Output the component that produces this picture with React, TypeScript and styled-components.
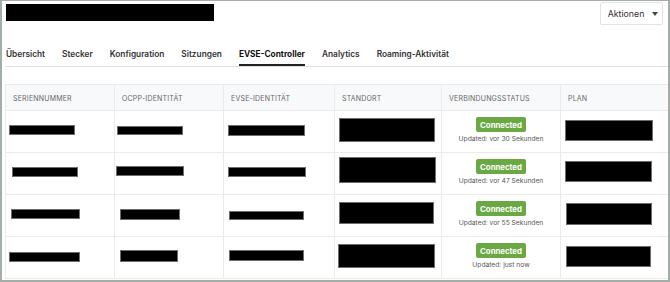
import React from "react";
import styled, { createGlobalStyle } from "styled-components";

const Global = createGlobalStyle`
  html, body { margin: 0; padding: 0; background: #fff; }
  body { font-family: Inter, "Noto Sans", Arial, sans-serif; }
  * { box-sizing: border-box; }
`;

const Frame = styled.div`
  width: 670px;
  height: 282px;
  border-style: solid;
  border-color: #a3aea9;
  border-width: 1px 2px 2px 2px;
  background: #fff;
  padding: 0 0 0 3px;
  display: flex;
  flex-direction: column;
  overflow: hidden;
`;

const Header = styled.div`
  display: flex;
  justify-content: space-between;
  align-items: flex-start;
  height: 41px;
`;

const Redaction = styled.div<{ $w: number; $h: number; $dx?: number; $dy?: number }>`
  width: ${(p) => p.$w}px;
  height: ${(p) => p.$h}px;
  background: #000;
  border: 1px solid #6d6d6d;
  margin-left: ${(p) => p.$dx ?? 0}px;
  margin-top: ${(p) => p.$dy ?? 0}px;
  flex: none;
`;

const TitleBlock = styled(Redaction)`
  margin: 3px 0 0 1px;
  border: none;
`;

const ActionButton = styled.button`
  margin: 1px 5px 0 0;
  width: 63px;
  height: 23px;
  background: #fff;
  border: 1px solid #e3e3e3;
  border-radius: 2px;
  font-family: Inter, "Noto Sans", Arial, sans-serif;
  font-size: 8.8px;
  color: #333;
  display: flex;
  align-items: center;
  justify-content: center;
  gap: 8px;
  padding: 0 0 0 3px;
`;

const Caret = styled.span`
  width: 0;
  height: 0;
  border-left: 3px solid transparent;
  border-right: 3px solid transparent;
  border-top: 4px solid #444;
`;

const TabBar = styled.div`
  display: flex;
  gap: 17px;
  border-bottom: 1px solid #e0e0e0;
  padding-left: 1px;
  height: 25px;
`;

const Tab = styled.div<{ $active?: boolean }>`
  font-size: 8.3px;
  font-weight: ${(p) => (p.$active ? 700 : 600)};
  color: ${(p) => (p.$active ? "#111" : "#333")};
  padding-top: 7px;
  height: 24px;
  border-bottom: 2px solid ${(p) => (p.$active ? "#222" : "transparent")};
  white-space: nowrap;
`;

const Table = styled.div`
  margin-top: 17px;
  width: 664px;
  border: 1px solid #ebebeb;
  border-bottom: none;
  display: grid;
  grid-template-columns: 109px 109px 111px 107px 119px 1fr;
`;

const HeadCell = styled.div<{ $last?: boolean }>`
  height: 26px;
  background: #f8f9fa;
  border-right: ${(p) => (p.$last ? "none" : "1px solid #ebebeb")};
  border-bottom: 1px solid #ebebeb;
  font-size: 7px;
  letter-spacing: 0.2px;
  color: #666;
  padding: 9px 0 0 7px;
  white-space: nowrap;
`;

const Cell = styled.div<{ $last?: boolean; $center?: boolean }>`
  height: 42px;
  border-right: ${(p) => (p.$last ? "none" : "1px solid #ebebeb")};
  border-bottom: 1px solid #ebebeb;
  display: flex;
  flex-direction: column;
  align-items: ${(p) => (p.$center ? "center" : "flex-start")};
  justify-content: flex-start;
`;

const Badge = styled.div`
  margin-top: 6px;
  background: #6aa843;
  color: #fff;
  font-weight: 700;
  font-size: 7.8px;
  border-radius: 2px;
  width: 50px;
  height: 15px;
  display: flex;
  align-items: center;
  justify-content: center;
`;

const Updated = styled.div`
  margin-top: 3px;
  font-size: 6.7px;
  color: #555;
  white-space: nowrap;
`;

type Box = [number, number, number, number]; // dx, dy, w, h

const rows: { boxes: Box[]; updated: string; plan: Box; standort: Box }[] = [
  {
    boxes: [
      [3, 14, 66, 10],
      [2, 15, 66, 9],
      [4, 14, 77, 11],
    ],
    standort: [4, 7, 96, 24],
    updated: "Updated: vor 30 Sekunden",
    plan: [4, 9, 88, 21],
  },
  {
    boxes: [
      [6, 14, 66, 10],
      [1, 13, 68, 10],
      [4, 14, 78, 10],
    ],
    standort: [4, 4, 97, 26],
    updated: "Updated: vor 47 Sekunden",
    plan: [4, 8, 87, 21],
  },
  {
    boxes: [
      [5, 14, 69, 10],
      [5, 14, 60, 11],
      [5, 16, 75, 9],
    ],
    standort: [4, 7, 95, 22],
    updated: "Updated: vor 55 Sekunden",
    plan: [5, 8, 86, 22],
  },
  {
    boxes: [
      [3, 15, 71, 10],
      [5, 13, 58, 12],
      [5, 13, 75, 11],
    ],
    standort: [3, 7, 97, 24],
    updated: "Updated: just now",
    plan: [5, 9, 85, 21],
  },
];

const tabs = [
  "Übersicht",
  "Stecker",
  "Konfiguration",
  "Sitzungen",
  "EVSE-Controller",
  "Analytics",
  "Roaming-Aktivität",
];

const heads = [
  "SERIENNUMMER",
  "OCPP-IDENTITÄT",
  "EVSE-IDENTITÄT",
  "STANDORT",
  "VERBINDUNGSSTATUS",
  "PLAN",
];

const R = ({ b }: { b: Box }) => <Redaction $dx={b[0]} $dy={b[1]} $w={b[2]} $h={b[3]} />;

export default function App() {
  return (
    <>
      <Global />
      <Frame>
        <Header>
          <TitleBlock $w={208} $h={17} />
          <ActionButton>
            Aktionen <Caret />
          </ActionButton>
        </Header>
        <TabBar>
          {tabs.map((t) => (
            <Tab key={t} $active={t === "EVSE-Controller"}>
              {t}
            </Tab>
          ))}
        </TabBar>
        <Table>
          {heads.map((h, i) => (
            <HeadCell key={h} $last={i === heads.length - 1}>
              {h}
            </HeadCell>
          ))}
          {rows.map((r, ri) => (
            <React.Fragment key={ri}>
              {r.boxes.map((b, i) => (
                <Cell key={i}>
                  <R b={b} />
                </Cell>
              ))}
              <Cell>
                <R b={r.standort} />
              </Cell>
              <Cell $center>
                <Badge>Connected</Badge>
                <Updated>{r.updated}</Updated>
              </Cell>
              <Cell $last>
                <R b={r.plan} />
              </Cell>
            </React.Fragment>
          ))}
        </Table>
      </Frame>
    </>
  );
}
